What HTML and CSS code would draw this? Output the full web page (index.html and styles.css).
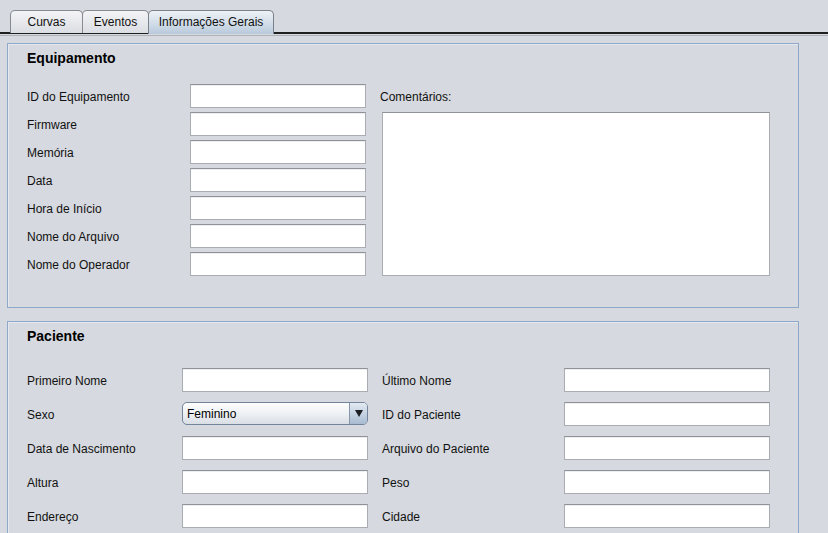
FILE: index.html
```html
<!DOCTYPE html>
<html lang="pt">
<head>
<meta charset="utf-8">
<link rel="stylesheet" href="styles.css">
</head>
<body>
<div class="tabbar">
  <div class="tab t1">Curvas</div>
  <div class="tab t2">Eventos</div>
  <div class="tab t3 selected">Informações Gerais</div>
</div>
<div class="rule"></div>
<div class="content">
  <section class="panel equip">
    <h2 class="ptitle">Equipamento</h2>
    <div class="grid1">
      <span class="lbl">ID do Equipamento</span><div class="field"></div>
      <span class="lbl com">Comentários:</span>
      <div class="area"></div>
      <span class="lbl">Firmware</span><div class="field"></div>
      <span class="lbl">Memória</span><div class="field"></div>
      <span class="lbl">Data</span><div class="field"></div>
      <span class="lbl">Hora de Início</span><div class="field"></div>
      <span class="lbl">Nome do Arquivo</span><div class="field"></div>
      <span class="lbl">Nome do Operador</span><div class="field"></div>
    </div>
  </section>
  <section class="panel pac">
    <h2 class="ptitle">Paciente</h2>
    <div class="grid2">
      <span class="lbl">Primeiro Nome</span><div class="field"></div>
      <span class="lbl">Último Nome</span><div class="field"></div>
      <span class="lbl">Sexo</span>
      <div class="combo"><span class="cval">Feminino</span><span class="cbtn"><svg width="8" height="7" viewBox="0 0 8 7"><path d="M0 0H8L4 7Z" fill="#1b1f24"/></svg></span></div>
      <span class="lbl">ID do Paciente</span><div class="field"></div>
      <span class="lbl">Data de Nascimento</span><div class="field"></div>
      <span class="lbl">Arquivo do Paciente</span><div class="field"></div>
      <span class="lbl">Altura</span><div class="field"></div>
      <span class="lbl">Peso</span><div class="field"></div>
      <span class="lbl">Endereço</span><div class="field"></div>
      <span class="lbl">Cidade</span><div class="field"></div>
    </div>
  </section>
</div>
</body>
</html>
```
FILE: styles.css
```css
html, body {
  margin: 0;
  padding: 0;
  background: #d6d9df;
  font-family: "Liberation Sans", Arial, sans-serif;
  font-size: 12px;
  color: #000;
  overflow: hidden;
  height: 533px;
}
.tabbar {
  display: flex;
  align-items: flex-end;
  height: 22px;
  padding: 10px 0 0 10px;
  border-bottom: 2px solid #1e1f21;
}
.tab {
  box-sizing: border-box;
  height: 23px;
  margin-bottom: -1px;
  border: 1px solid #878b91;
  border-bottom: none;
  border-radius: 5px 5px 0 0;
  background: linear-gradient(#f3f4f6, #dadde2);
  display: flex;
  align-items: center;
  justify-content: center;
  padding-bottom: 1px;
  color: #111;
}
.t1 { width: 73px; }
.t2 { width: 67px; margin-left: -1px; }
.t3 { width: 126px; margin-left: -1px; }
.tab.selected {
  height: 24px;
  margin-bottom: -2px;
  background: linear-gradient(#eef2f7, #c9d6e4 70%, #b9c9db);
  border-color: #7c8088;
}
.rule {
  margin-top: 1px;
  border-top: 1px solid #aeb1b6;
}
.content {
  padding: 7px 0 0 7px;
}
.panel {
  width: 792px;
  box-sizing: border-box;
  border: 1px solid #8ea8c8;
  box-shadow: inset 1px 1px 0 #e4e9f0;
}
.ptitle {
  margin: 0;
  font-size: 14px;
  font-weight: bold;
  line-height: 17px;
  padding-left: 19px;
  color: #000;
}
.lbl {
  align-self: center;
  padding-top: 2px;
  white-space: nowrap;
  color: #111;
}
.field {
  height: 24px;
  box-sizing: border-box;
  background: #fff;
  border: 1px solid #a9acb1;
  border-top-color: #8e9196;
  box-shadow: inset 0 1px 0 #eceef0;
}
.equip {
  height: 265px;
  padding-top: 6px;
}
.grid1 {
  display: grid;
  grid-template-columns: 163px 176px 14px 390px;
  grid-auto-rows: 24px;
  row-gap: 4px;
  margin-top: 17px;
  padding-left: 19px;
}
.grid1 .lbl { grid-column: 1; }
.grid1 .field { grid-column: 2; }
.grid1 .lbl.com { grid-column: 4; grid-row: 1; }
.grid1 .area {
  grid-column: 4;
  grid-row: 2 / 8;
  margin-left: 2px;
  width: 388px;
  height: 164px;
  box-sizing: border-box;
  background: #fff;
  border: 1px solid #a9acb1;
  border-top-color: #8e9196;
}
.pac {
  margin-top: 13px;
  height: 230px;
  padding-top: 6px;
}
.grid2 {
  display: grid;
  grid-template-columns: 155px 186px 14px 182px 206px;
  grid-auto-rows: 24px;
  row-gap: 10px;
  margin-top: 23px;
  padding-left: 19px;
}
.grid2 .lbl:nth-child(4n+1) { grid-column: 1; }
.grid2 .lbl:nth-child(4n+3) { grid-column: 4; }
.grid2 > :nth-child(4n+2) { grid-column: 2; }
.grid2 > :nth-child(4n+4) { grid-column: 5; }
.combo {
  height: 23px;
  box-sizing: border-box;
  border: 1px solid #74849a;
  border-radius: 5px;
  background: linear-gradient(#fdfdfe, #eef1f4 50%, #d9dee5);
  display: flex;
  align-items: stretch;
  overflow: hidden;
}
.cval {
  flex: 1;
  display: flex;
  align-items: center;
  padding-left: 4px;
  color: #000;
}
.cbtn {
  width: 17px;
  border-left: 1px solid #8596ab;
  background: linear-gradient(#e3eaf2, #c3d1e1 55%, #a8bbd1);
  display: flex;
  align-items: center;
  justify-content: center;
}
```
